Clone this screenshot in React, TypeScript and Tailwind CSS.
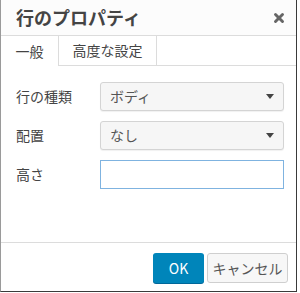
import { X } from "lucide-react";

const font = { fontFamily: '"Noto Sans CJK JP", "Noto Sans", sans-serif' };

function Arrow() {
  return (
    <svg width="8" height="5" viewBox="0 0 8 5" className="shrink-0">
      <path d="M0 0h8L4 5z" fill="#444" />
    </svg>
  );
}

function SelectBox({ value }: { value: string }) {
  return (
    <div className="flex h-[29px] w-[184px] items-center justify-between rounded-[3px] border border-[#d4d4d4] bg-[#f6f6f6] pl-[9px] pr-[9px] text-[14px] text-[#555] shadow-[0_1px_1px_rgba(0,0,0,0.06)]">
      <span>{value}</span>
      <Arrow />
    </div>
  );
}

export default function App() {
  return (
    <div className="h-[293px] w-[300px] bg-white" style={font}>
      <div className="flex h-[292px] w-[297px] flex-col border-b border-l border-r border-b-[#3a3a3a] border-l-[#9a9a9a] border-r-[#3a3a3a] bg-white">
        <div className="flex h-[36px] shrink-0 items-center justify-between border-b border-[#dcdcdc] bg-[#fcfcfc] pl-[15px] pr-[10px]">
          <span className="text-[18px] font-bold text-[#444]">行のプロパティ</span>
          <X size={14} strokeWidth={5} className="text-[#666]" />
        </div>

        <div className="flex h-[30px] shrink-0 text-[14px] text-[#444]">
          <div className="flex w-[58px] items-center justify-center border-r border-[#dcdcdc] bg-white">
            一般
          </div>
          <div className="flex w-[98px] items-center justify-center border-b border-r border-[#dcdcdc] bg-white">
            高度な設定
          </div>
          <div className="grow border-b border-[#dcdcdc]"></div>
        </div>

        <div className="flex grow flex-col gap-[10px] pl-[15px] pt-[16px] text-[14px] text-[#444]">
          <div className="flex items-center">
            <span className="w-[84px]">行の種類</span>
            <SelectBox value="ボディ" />
          </div>
          <div className="flex items-center">
            <span className="w-[84px]">配置</span>
            <SelectBox value="なし" />
          </div>
          <div className="flex items-center">
            <span className="w-[84px]">高さ</span>
            <div className="h-[29px] w-[184px] border border-[#7fb3e0] bg-white"></div>
          </div>
        </div>

        <div className="flex h-[49px] shrink-0 items-start justify-end gap-[3px] border-t border-[#dcdcdc] pr-[8px] pt-[10px]">
          <button className="flex h-[30px] w-[51px] items-center justify-center rounded-[3px] bg-[#0085ba] text-[14px] text-white shadow-[0_1px_0_#006799]">
            OK
          </button>
          <button className="flex h-[30px] w-[81px] items-center justify-center rounded-[3px] border border-[#cfcfcf] bg-[#f7f7f7] text-[14px] text-[#555]">
            キャンセル
          </button>
        </div>
      </div>
    </div>
  );
}
